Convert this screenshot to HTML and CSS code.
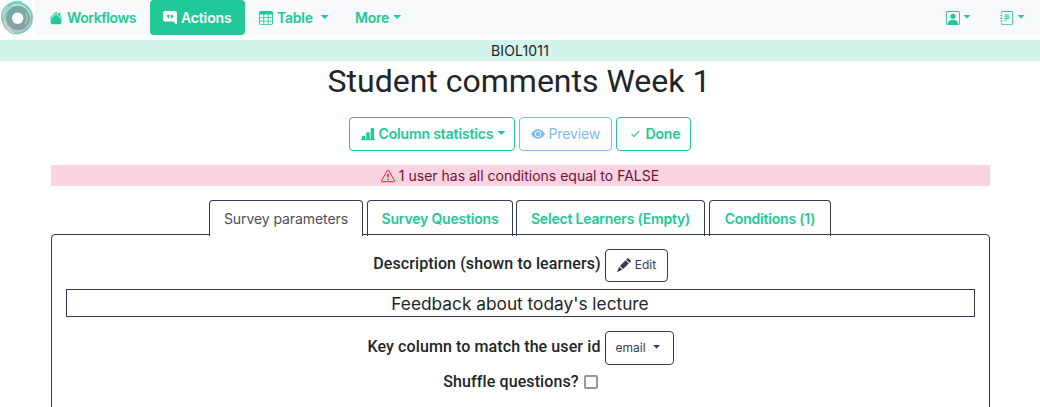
FILE: index.html
```html
<!DOCTYPE html>
<html lang="en">
<head>
<meta charset="utf-8">
<title>Student comments Week 1</title>
<link rel="stylesheet" href="styles.css">
</head>
<body>
<header class="topbar">
  <a class="brand" aria-label="Home">
    <svg width="35" height="35" viewBox="0 0 35 35" fill="none">
      <defs><linearGradient id="ring" x1="0" y1="0" x2="1" y2="1"><stop offset="0" stop-color="#5bb7a6"/><stop offset=".5" stop-color="#85a5a3"/><stop offset="1" stop-color="#8f9799"/></linearGradient></defs>
      <circle cx="17.500" cy="17.500" r="15" fill="#b3c9c7"/>
      <circle cx="18" cy="18" r="12" fill="url(#ring)"/>
      <circle cx="17.500" cy="17.500" r="15.300" stroke="#a5bfbd" stroke-width="1"/>
      <path d="M2 21A16 16 0 0 1 22 2" stroke="#5fe0c8" stroke-width="1.200"/>
      <path d="M8 6A15 15 0 0 1 31 23" stroke="#58d2bb" stroke-width="1.200"/>
      <path d="M6 9A14 14 0 0 0 10 29" stroke="#d8ebe8" stroke-width=".8"/>
      <path d="M11 6A13.500 13.500 0 0 1 30 15" stroke="#e5f5f2" stroke-width=".8"/>
      <path d="M5 14A13 13 0 0 0 27 28" stroke="#9fb5b3" stroke-width="1"/>
      <path d="M13 33A16 16 0 0 0 32 22" stroke="#58d8bf" stroke-width="1.200"/>
      <path d="M26 13Q29 19 25 24" stroke="#72e8d2" stroke-width="1.300"/>
      <circle cx="17.700" cy="18.300" r="5.700" fill="#fff"/>
    </svg>
  </a>
  <nav class="nav">
    <a class="nav-item workflows"><svg class="icon" viewBox="0 0 16 16"><path d="M8 3.300 14 9.300V13.500A1.500 1.500 0 0 1 12.500 15H3.500A1.500 1.500 0 0 1 2 13.500V9.300Z"/><path d="M7.300 1.500a1 1 0 0 1 1.400 0L11 3.800V2h2v3.800l2.400 2.400-.7.700L8 2.200 1.300 8.900.6 8.200Z"/></svg><span>Workflows</span></a>
    <a class="nav-item actions"><svg class="icon" viewBox="0 0 16 16"><path fill-rule="evenodd" d="M16 2a2 2 0 0 0-2-2H2a2 2 0 0 0-2 2v8a2 2 0 0 0 2 2h9.500a1 1 0 0 1 .8.400l1.900 2.500a1 1 0 0 0 1.800-.6ZM7.200 4.800C7.800 6.300 7.300 8 5.600 9l-.5-.6c.6-.5 1-.9 1.100-1.400A1.500 1.500 0 1 1 7.200 4.800Zm4 0C11.800 6.300 11.300 8 9.600 9l-.5-.6c.6-.5 1-.9 1.100-1.400a1.500 1.500 0 1 1 1-2.200Z"/></svg><span>Actions</span></a>
    <a class="nav-item table"><svg class="icon" viewBox="0 0 16 16"><path fill-rule="evenodd" d="M2 0h12a2 2 0 0 1 2 2v12a2 2 0 0 1-2 2H2a2 2 0 0 1-2-2V2a2 2 0 0 1 2-2ZM1 4v3h4V4Zm5 0v3h4V4Zm5 0v3h4V4ZM1 8v3h4V8Zm5 0v3h4V8Zm5 0v3h4V8ZM1 12v2a1 1 0 0 0 1 1h3v-3Zm5 0v3h4v-3Zm5 0v3h3a1 1 0 0 0 1-1v-2Z"/></svg><span>Table</span><i class="caret"></i></a>
    <a class="nav-item more"><span>More</span><i class="caret"></i></a>
    <a class="nav-item user" aria-label="Profile"><svg class="icon" viewBox="0 0 16 16"><circle cx="8" cy="6" r="3"/><path d="M2 0h12a2 2 0 0 1 2 2v12a2 2 0 0 1-2 2H2a2 2 0 0 1-2-2V2a2 2 0 0 1 2-2Zm0 1a1 1 0 0 0-1 1v12a1 1 0 0 0 1 1c0-1 1-5 6-5s6 4 6 5a1 1 0 0 0 1-1V2a1 1 0 0 0-1-1Z"/></svg><i class="caret"></i></a>
    <a class="nav-item docs" aria-label="Documentation"><svg class="icon" viewBox="0 0 16 16"><path d="M5 10.500a.5.500 0 0 1 .5-.5h2a.5.500 0 0 1 0 1h-2a.5.500 0 0 1-.5-.5Zm0-2a.5.500 0 0 1 .5-.5h5a.5.500 0 0 1 0 1h-5a.5.500 0 0 1-.5-.5Zm0-2a.5.500 0 0 1 .5-.5h5a.5.500 0 0 1 0 1h-5a.5.500 0 0 1-.5-.5Zm0-2a.5.500 0 0 1 .5-.5h5a.5.500 0 0 1 0 1h-5a.5.500 0 0 1-.5-.5Z"/><path d="M3 0h10a2 2 0 0 1 2 2v12a2 2 0 0 1-2 2H3a2 2 0 0 1-2-2v-1h1v1a1 1 0 0 0 1 1h10a1 1 0 0 0 1-1V2a1 1 0 0 0-1-1H3a1 1 0 0 0-1 1v1H1V2a2 2 0 0 1 2-2Z"/><path d="M1 5v-.5a.5.500 0 0 1 1 0V5h.5a.5.500 0 0 1 0 1h-2a.5.500 0 0 1 0-1Zm0 3v-.5a.5.500 0 0 1 1 0V8h.5a.5.500 0 0 1 0 1h-2a.5.500 0 0 1 0-1Zm0 3v-.5a.5.500 0 0 1 1 0v.5h.5a.5.500 0 0 1 0 1h-2a.5.500 0 0 1 0-1Z"/></svg><i class="caret"></i></a>
  </nav>
</header>
<div class="course"><span>BIOL1011</span></div>
<main class="content">
  <h1 class="title"><span>Student comments Week 1</span></h1>
  <div class="toolbar">
    <button class="btn stats"><svg class="icon" viewBox="0 0 16 16"><path d="M1 11a1 1 0 0 1 1-1h2a1 1 0 0 1 1 1v4H1Zm5-4a1 1 0 0 1 1-1h2a1 1 0 0 1 1 1v8H6Zm5-5a1 1 0 0 1 1-1h2a1 1 0 0 1 1 1v13h-4ZM0 14h16v1H0Z"/></svg><span>Column statistics</span><i class="caret"></i></button>
    <button class="btn preview"><svg class="icon" viewBox="0 0 16 16"><circle cx="8" cy="8" r="2.500"/><path d="M0 8s3-5.500 8-5.500S16 8 16 8s-3 5.500-8 5.500S0 8 0 8Zm8 3.500a3.500 3.500 0 1 0 0-7 3.500 3.500 0 0 0 0 7Z"/></svg><span>Preview</span></button>
    <button class="btn done"><svg class="icon" viewBox="0 0 16 16"><path d="m4.500 8.400 2.500 2.500 5-6" fill="none" stroke="currentColor" stroke-width="1.300" stroke-linecap="round" stroke-linejoin="round"/></svg><span>Done</span></button>
  </div>
  <div class="alert"><svg class="icon" viewBox="0 0 16 16"><path d="M7.100 2a1 1 0 0 1 1.800 0l6.500 11.200c.4.600 0 1.300-.8 1.300H1.400c-.8 0-1.200-.7-.8-1.300Z" fill="none" stroke="currentColor"/><path d="M7.100 5.800h1.800l-.4 4.500h-1Z"/><circle cx="8" cy="12" r=".9"/></svg><span>1 user has all conditions equal to FALSE</span></div>
  <div class="tabs">
    <a class="tab t1 active"><span>Survey parameters</span></a>
    <a class="tab t2"><span>Survey Questions</span></a>
    <a class="tab t3"><span>Select Learners (Empty)</span></a>
    <a class="tab t4"><span>Conditions (1)</span></a>
  </div>
  <section class="panel">
    <div class="row description"><span class="label">Description (shown to learners)</span><button class="small edit"><svg class="icon" viewBox="0 0 16 16"><path d="M12.900.2a.5.500 0 0 0-.8 0l-1.600 1.600 3.700 3.700 1.600-1.600a.5.500 0 0 0 0-.8ZM13.500 6.200 9.800 2.500 3.300 9h.2a.5.500 0 0 1 .5.500v.5h.5a.5.500 0 0 1 .5.500v.5h.5a.5.500 0 0 1 .5.500v.5h.5a.5.500 0 0 1 .5.500v.2ZM6 13.700V13h-.5a.5.500 0 0 1-.5-.5V12h-.5a.5.500 0 0 1-.5-.5V11h-.5a.5.500 0 0 1-.5-.5V10h-.7L2 11.200 0 16l4.900-2Z"/></svg><span>Edit</span></button></div>
    <div class="feedback"><span>Feedback about today's lecture</span></div>
    <div class="row key"><span class="label">Key column to match the user id</span><button class="small email"><span>email</span><i class="caret"></i></button></div>
    <label class="row shuffle"><span class="label">Shuffle questions?</span><input class="check" type="checkbox"></label>
  </section>
</main>
</body>
</html>
```
FILE: styles.css
```css
* { box-sizing: border-box; }
body { margin: 0; height: 407px; overflow: hidden; background: #fff; color: #212529; font: 14px/21px Inter, sans-serif; }
.icon { flex: none; width: 14px; height: 14px; fill: currentColor; }
.caret { flex: none; width: 8px; height: 4px; margin-bottom: 1px; background: currentColor; clip-path: polygon(0 0, 100% 0, 50% 100%); }
span { white-space: nowrap; }

.topbar { display: flex; height: 35px; }
.brand { width: 35px; height: 35px; }
.nav { display: flex; flex: 1; background: #f8f9fb; }
.nav-item { display: flex; align-items: center; height: 35px; gap: 4px; color: #20c997; font-weight: 560; }
.workflows { padding-left: 14px; width: 115px; letter-spacing: -.4px; }
.actions { padding-left: 13px; width: 95px; background: #20c997; color: #fff; border-radius: 4px; letter-spacing: -.15px; }
.table { padding-left: 14px; width: 96px; letter-spacing: -.25px; }
.table .caret { margin-left: 4px; }
.more { padding-left: 14px; letter-spacing: -.2px; }
.user { margin-left: auto; width: 54px; }
.docs { width: 40px; }
.user .icon, .docs .icon { margin-right: -1px; }
.user .caret, .docs .caret { margin-bottom: 2px; }

.course { height: 21px; margin-top: 5px; background: #d2f4ea; text-align: center; line-height: 22px; letter-spacing: .15px; }
.content { width: 939px; margin: 0 auto 0 51px; }
.title { margin: 0 0 18px; height: 38px; padding-right: 3px; font: 430 32px/40px Roboto, sans-serif; text-align: center; }

.toolbar { display: flex; justify-content: center; gap: 4px; margin-right: 1px; }
.btn { display: flex; align-items: center; gap: 4px; height: 34px; padding: 0 0 1px 10.500px; border: 1px solid #20c997; border-radius: 4px; background: #fff; color: #20c997; font: 560 14px/21px Inter, sans-serif; letter-spacing: -.14px; }
.stats { width: 166px; }
.preview { width: 93px; border-color: #7dbbf8; color: #7dbbf8; font-weight: 430; }
.done { width: 75px; }

.alert { display: flex; justify-content: center; align-items: center; gap: 4px; height: 21px; margin-top: 14px; padding-right: 1px; background: #fad3e0; color: #6f1237; }
.alert .icon { color: #f00; }

.tabs { display: flex; justify-content: center; gap: 4px; height: 34px; margin: 14px 2px 0 0; }
.tab { height: 36px; padding: 7px 0 0 1px; border: 1px solid #343a53; border-bottom: 0; border-radius: 4px 4px 0 0; color: #20c997; font-weight: 560; text-align: center; letter-spacing: -.19px; }
.t1 { width: 154px; }
.t2 { width: 146px; margin-right: -1px; }
.t3 { width: 189px; }
.t4 { width: 122px; }
.active { z-index: 1; background: #fff; color: #495057; font-weight: 430; letter-spacing: -.08px; }

.panel { display: flex; flex-direction: column; height: 190px; padding: 14px 14px 0; border: 1px solid #343a53; border-radius: 4px; }
.row { display: flex; justify-content: center; gap: 4px; }
.label { font: 480 16px/30px Roboto, sans-serif; letter-spacing: .1px; }
.small { display: flex; align-items: center; gap: 4px; height: 33px; padding: 0 0 1px 11px; border: 1px solid #343a53; border-radius: 4px; background: #fff; color: #343a53; font: 430 12px/18px Inter, sans-serif; }
.edit { width: 63px; }
.email { width: 69px; height: 34px; padding-left: 10px; }
.email .caret { margin-left: 3px; margin-bottom: 2px; }
.feedback { height: 28px; margin-top: 7px; padding-right: 1px; border: 1px solid #343a53; font-size: 17.300px; line-height: 27px; text-align: center; }
.key { margin-top: 14px; }
.key .label { line-height: 31px; }
.shuffle { margin-top: 2px; }
.check { appearance: none; width: 14px; height: 14px; margin: 8px 0 0 1px; border: 2px solid #9a94a5; border-radius: 2px; background: #fff; }
```
